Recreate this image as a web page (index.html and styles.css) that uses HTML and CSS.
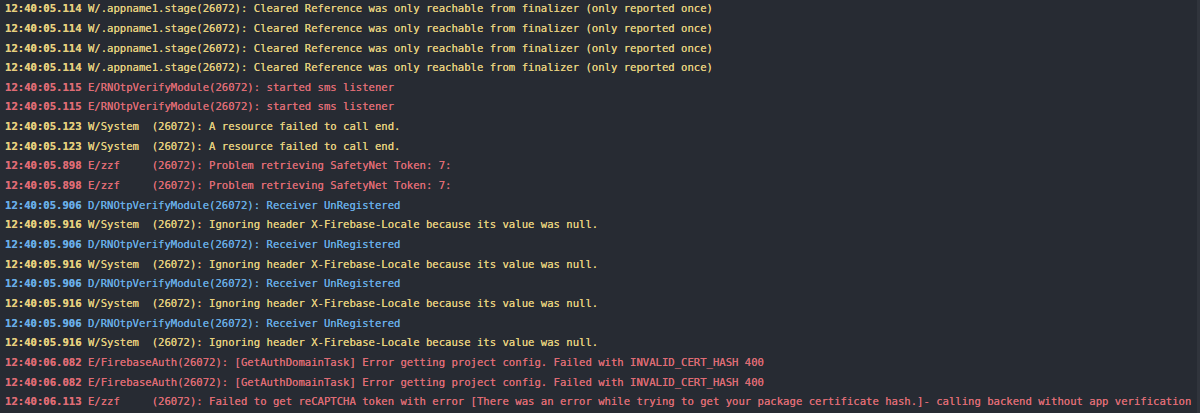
FILE: index.html
```html
<!DOCTYPE html>
<html>
<head>
<meta charset="utf-8">
<link rel="stylesheet" href="styles.css">
</head>
<body>
<div class="log">
<div class="ln w"><b>12:40:05.114</b> W/.appname1.stage(26072): Cleared Reference was only reachable from finalizer (only reported once)</div>
<div class="ln w"><b>12:40:05.114</b> W/.appname1.stage(26072): Cleared Reference was only reachable from finalizer (only reported once)</div>
<div class="ln w"><b>12:40:05.114</b> W/.appname1.stage(26072): Cleared Reference was only reachable from finalizer (only reported once)</div>
<div class="ln w"><b>12:40:05.114</b> W/.appname1.stage(26072): Cleared Reference was only reachable from finalizer (only reported once)</div>
<div class="ln e"><b>12:40:05.115</b> E/RNOtpVerifyModule(26072): started sms listener</div>
<div class="ln e"><b>12:40:05.115</b> E/RNOtpVerifyModule(26072): started sms listener</div>
<div class="ln w"><b>12:40:05.123</b> W/System  (26072): A resource failed to call end.</div>
<div class="ln w"><b>12:40:05.123</b> W/System  (26072): A resource failed to call end.</div>
<div class="ln e"><b>12:40:05.898</b> E/zzf     (26072): Problem retrieving SafetyNet Token: 7: </div>
<div class="ln e"><b>12:40:05.898</b> E/zzf     (26072): Problem retrieving SafetyNet Token: 7: </div>
<div class="ln d"><b>12:40:05.906</b> D/RNOtpVerifyModule(26072): Receiver UnRegistered</div>
<div class="ln w"><b>12:40:05.916</b> W/System  (26072): Ignoring header X-Firebase-Locale because its value was null.</div>
<div class="ln d"><b>12:40:05.906</b> D/RNOtpVerifyModule(26072): Receiver UnRegistered</div>
<div class="ln w"><b>12:40:05.916</b> W/System  (26072): Ignoring header X-Firebase-Locale because its value was null.</div>
<div class="ln d"><b>12:40:05.906</b> D/RNOtpVerifyModule(26072): Receiver UnRegistered</div>
<div class="ln w"><b>12:40:05.916</b> W/System  (26072): Ignoring header X-Firebase-Locale because its value was null.</div>
<div class="ln d"><b>12:40:05.906</b> D/RNOtpVerifyModule(26072): Receiver UnRegistered</div>
<div class="ln w"><b>12:40:05.916</b> W/System  (26072): Ignoring header X-Firebase-Locale because its value was null.</div>
<div class="ln e"><b>12:40:06.082</b> E/FirebaseAuth(26072): [GetAuthDomainTask] Error getting project config. Failed with INVALID_CERT_HASH 400</div>
<div class="ln e"><b>12:40:06.082</b> E/FirebaseAuth(26072): [GetAuthDomainTask] Error getting project config. Failed with INVALID_CERT_HASH 400</div>
<div class="ln e"><b>12:40:06.113</b> E/zzf     (26072): Failed to get reCAPTCHA token with error [There was an error while trying to get your package certificate hash.]- calling backend without app verification</div>
</div>
</body>
</html>
```
FILE: styles.css
```css
html, body {
  margin: 0;
  padding: 0;
  background: #272b33;
  overflow: hidden;
}
.log {
  width: 1200px;
  height: 413px;
  border-right: 3px solid #30343c;
  background: #272b33;
  padding: 0 0 0 5px;
  box-sizing: border-box;
  font-family: "DejaVu Sans Mono", "Liberation Mono", monospace;
  font-size: 10.6px;
  line-height: 19.65px;
  overflow: hidden;
}
.ln {
  white-space: pre;
  text-shadow: 0 0 0.3px currentColor;
}
.ln:first-child { margin-top: -0.8px; }
.ln b { font-weight: bold; }
.w { color: #e5cf7d; }
.e { color: #de6b74; }
.d { color: #68ade6; }
```
